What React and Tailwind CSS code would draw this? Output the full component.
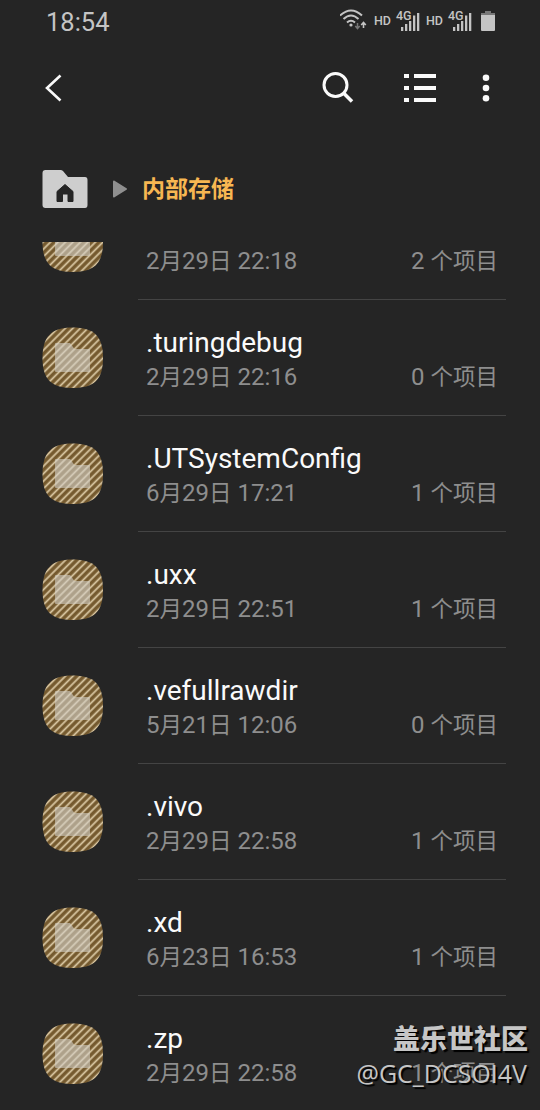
const items = [
  { name: '', month: 2, day: 29, time: '22:18', count: 2 },
  { name: '.turingdebug', month: 2, day: 29, time: '22:16', count: 0 },
  { name: '.UTSystemConfig', month: 6, day: 29, time: '17:21', count: 1 },
  { name: '.uxx', month: 2, day: 29, time: '22:51', count: 1 },
  { name: '.vefullrawdir', month: 5, day: 21, time: '12:06', count: 0 },
  { name: '.vivo', month: 2, day: 29, time: '22:58', count: 1 },
  { name: '.xd', month: 6, day: 23, time: '16:53', count: 1 },
  { name: '.zp', month: 2, day: 29, time: '22:58', count: 1 },
];

function Signal() {
  return (
    <svg className="w-6 h-7 overflow-visible" viewBox="0 0 24 28" fill="#c4c4c4">
      <text x="-1" y="14" fontSize="12.500" fontWeight="500" fontFamily="Roboto, sans-serif">4G</text>
      <rect x="4" y="21" width="2.300" height="4" />
      <rect x="8" y="18" width="2.300" height="7" />
      <rect x="12" y="15" width="2.300" height="10" />
      <rect x="16" y="9.500" width="2.300" height="15.500" />
      <rect x="20" y="7" width="2.300" height="18" />
    </svg>
  );
}

function StatusBar() {
  return (
    <div className="h-[45px] flex items-start justify-between pl-[46px] pr-[44px] text-[#c4c4c4]">
      <span className="text-[25.5px] leading-[45px]">18:54</span>
      <div className="flex items-start pt-[6px]">
        <svg className="w-[28px] h-7" viewBox="0 0 28 28" fill="none" stroke="#c4c4c4" strokeWidth="2">
          <path d="M0 9.500Q11 -0.500 22 9.500M3.500 13Q11 6 18.500 13M7 16.500Q11 13 15 16.500" />
          <circle cx="11" cy="19" r="1.600" fill="#c4c4c4" stroke="none" />
          <path d="M17.500 17v5M15.300 20l2.200 2.500 2.200-2.500" stroke="#777" strokeWidth="1.500" />
          <path d="M23.500 22v-5M21.200 19l2.300-2.500 2.300 2.500" strokeWidth="1.600" />
        </svg>
        <span className="ml-[6px] w-[23px] text-[12.500px] font-medium leading-[29px]">HD</span>
        <Signal />
        <span className="ml-[5px] w-[23px] text-[12.500px] font-medium leading-[29px]">HD</span>
        <Signal />
        <svg className="ml-[7px] w-4 h-7" viewBox="0 0 16 28">
          <rect x="5" y="5" width="6" height="3" fill="#777" />
          <rect x="1" y="7" width="14" height="3" fill="#777" />
          <path d="M1 9h14v15q0 1-1 1H2q-1 0-1-1z" fill="#c4c4c4" />
        </svg>
      </div>
    </div>
  );
}

function Toolbar() {
  return (
    <div className="h-[85px] flex items-center pl-[44px] pr-[48px]">
      <button type="button">
        <svg className="w-5 h-8" viewBox="0 0 20 32" fill="none" stroke="#fafafa" strokeWidth="2.600">
          <path d="M16.500 3.500L3 16l13.500 12.500" />
        </svg>
      </button>
      <div className="flex-1" />
      <button type="button">
        <svg className="w-9 h-9" viewBox="0 0 36 36" fill="none" stroke="#fafafa" strokeWidth="3">
          <circle cx="15.500" cy="15" r="11.500" />
          <path d="M23.500 23l8.500 8.500" strokeWidth="3.500" />
        </svg>
      </button>
      <button type="button" className="ml-[46px]">
        <svg className="w-9 h-9" viewBox="0 0 36 36" fill="#fafafa">
          <rect x="2" y="4" width="5" height="4" />
          <rect x="12" y="4" width="22" height="4" />
          <rect x="2" y="16" width="5" height="4" />
          <rect x="12" y="16" width="22" height="4" />
          <rect x="2" y="28" width="5" height="4" />
          <rect x="12" y="28" width="22" height="4" />
        </svg>
      </button>
      <button type="button" className="ml-[42px]">
        <svg className="w-3 h-9" viewBox="0 0 12 36" fill="#fafafa">
          <circle cx="6" cy="7.700" r="3.300" />
          <circle cx="6" cy="18" r="3.300" />
          <circle cx="6" cy="28.300" r="3.300" />
        </svg>
      </button>
    </div>
  );
}

function Breadcrumb() {
  return (
    <div className="h-[112px] flex items-center pl-[42px] pt-[5px]">
      <svg className="w-[46px] h-10" viewBox="0 0 46 40">
        <path d="M3.500 1H18.500Q20 1 21 2L26 8H43Q45.500 8 45.500 11V36Q45.500 39 43 39H3.500Q.5 39 .5 36V4Q.5 1 3.500 1z" fill="#cecece" />
        <path d="M23 15.500L31 22.500V32.500H26V25H20.500V32.500H15V22.500z" fill="#252525" stroke="#252525" strokeLinejoin="round" />
      </svg>
      <svg className="ml-6 w-4 h-5" viewBox="0 0 16 20">
        <path d="M2 2.500L14 10 2 17.500z" fill="#8f8f8f" stroke="#8f8f8f" strokeLinejoin="round" strokeWidth="2" />
      </svg>
      <span className="ml-[14px] pt-[3px] text-[23px] leading-8 font-bold text-[#f7b752]">内部存储</span>
    </div>
  );
}

function FolderIcon() {
  return (
    <svg className="w-[61px] h-[61px] shrink-0" viewBox="0 0 61 61">
      <defs>
        <pattern id="stripes" width="5.300" height="5.300" patternUnits="userSpaceOnUse" patternTransform="rotate(45)">
          <rect width="5.300" height="5.300" fill="#755a2f" />
          <rect x="0.600" width="1.700" height="5.300" fill="#dccaa6" />
        </pattern>
      </defs>
      <path d="M30.500 0.500C52 0.500 61 9 61 31S52 61 30.500 61 0.500 52 0.500 31 9 0.500 30.500 0.500z" fill="url(#stripes)" />
      <path d="M13 17Q13 16 14 16H28L32.500 22H47Q48 22 48 23V44Q48 45 47 45H14Q13 45 13 44z" fill="#d4d0c8" fillOpacity=".6" />
    </svg>
  );
}

function FileRow({ item, last }) {
  return (
    <div className="h-[116px] shrink-0 flex pl-[42px] pr-[34px]">
      <div className="pt-[27px]">
        <FolderIcon />
      </div>
      <div className={`ml-[35px] flex-1 pl-[8px] pr-[8px] pt-6 border-b ${last ? 'border-transparent' : 'border-[#444]'}`}>
        <div className="h-[37px] text-[28px] leading-[37px] text-[#fafafa]">{item.name}</div>
        <div className="flex justify-between text-[24px] leading-[32px] text-[#8e8e8e] whitespace-nowrap">
          <span>
            {item.month}<span className="text-[22.5px]">月</span>{item.day}<span className="text-[22.5px]">日</span> {item.time}
          </span>
          <span>{item.count} <span className="text-[22.5px]">个项目</span></span>
        </div>
      </div>
    </div>
  );
}

export default function App() {
  return (
    <div className="relative w-[540px] h-[1110px] overflow-hidden flex flex-col bg-[#252525] font-[Roboto,'Noto_Sans_CJK_SC',sans-serif]">
      <StatusBar />
      <Toolbar />
      <Breadcrumb />
      <div className="flex-1 min-h-0 overflow-hidden">
        <div className="-mt-[58px] flex flex-col">
          {items.map((item, i) => (
            <FileRow key={i} item={item} last={i === items.length - 1} />
          ))}
        </div>
      </div>
      <div className="absolute right-[12px] bottom-[21px] text-right text-[#c6c6c6] [text-shadow:2px_2px_1px_#000]">
        <div className="text-[27px] leading-[33px] font-black">盖乐世社区</div>
        <div className="pr-[1px] text-[25px] leading-8 font-['Open_Sans',sans-serif]">@GC_DCSOI4V</div>
      </div>
    </div>
  );
}
